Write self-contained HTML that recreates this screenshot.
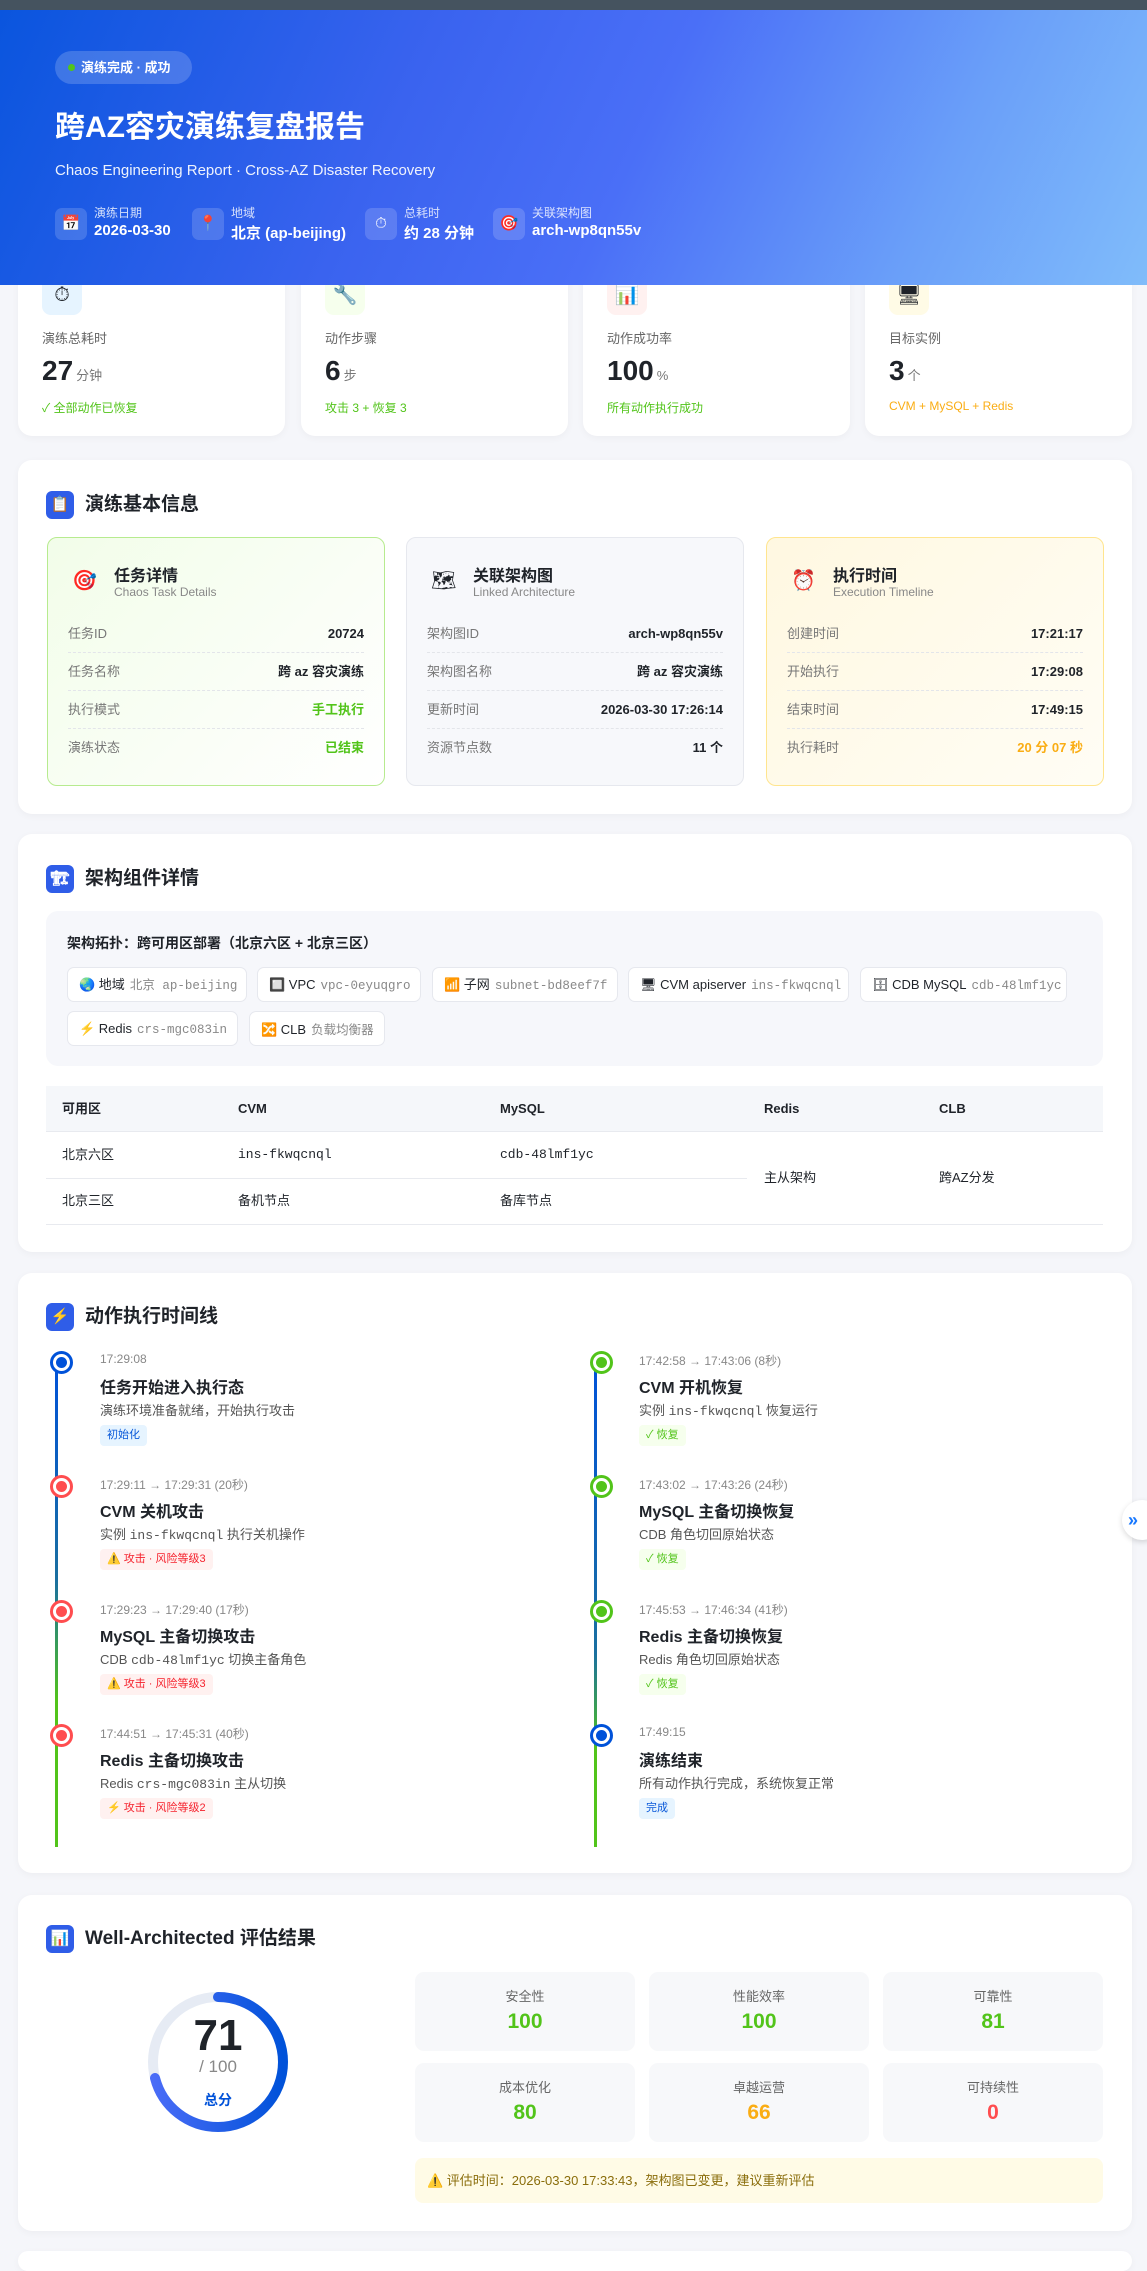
<!DOCTYPE html>
<html><head><meta charset="utf-8">
<style>
*{margin:0;padding:0;box-sizing:border-box}
body{width:1147px;height:2253px;background:#f5f6fa;font-family:"Liberation Sans","Noto Sans CJK SC",sans-serif;color:#1f2329;position:relative;overflow:hidden}
.a{position:absolute}
.mono{font-family:"Liberation Mono","Noto Sans CJK SC",monospace}
.topbar{left:0;top:0;width:1147px;height:10px;background:#45535f}
.hero{left:0;top:10px;width:1147px;height:275px;background:linear-gradient(115deg,#0a55de 0%,#3a63ef 35%,#4a6ff7 55%,#6a9ff9 80%,#80bcfa 100%);z-index:2;color:#fff}
.badge{left:55px;top:41px;height:33px;width:137px;border-radius:17px;background:rgba(255,255,255,.18);font-size:13px;font-weight:bold;line-height:33px;padding-left:26px}
.badge:before{content:"";position:absolute;left:13px;top:13px;width:7px;height:7px;border-radius:50%;background:#52c41a}
.mi{top:198px;height:32px}
.mi .ib{position:absolute;left:0;top:0;width:32px;height:32px;border-radius:7px;background:rgba(255,255,255,.16);font-size:15px;text-align:center;line-height:32px}
.mi .l{position:absolute;left:39px;top:-4px;font-size:12px;opacity:.8;white-space:nowrap}
.mi .v{position:absolute;left:39px;top:14px;font-size:15px;font-weight:bold;white-space:nowrap}
.card{background:#fff;border-radius:14px;box-shadow:0 2px 8px rgba(0,0,0,.04)}
.stat{top:250px;height:186px;width:267px}
.stat .ic{position:absolute;left:24px;top:25px;width:40px;height:40px;border-radius:9px;font-size:20px;text-align:center;line-height:40px}
.stat .lb{position:absolute;left:24px;top:78px;font-size:13px;color:#666}
.stat .vl{position:absolute;left:24px;top:105px;font-size:28px;font-weight:bold;color:#1f2329}
.stat .vl span{font-size:13px;font-weight:normal;color:#777;margin-left:3px}
.stat .sb{position:absolute;left:24px;top:149px;font-size:12px}
.sec{left:18px;width:1114px}
.h{position:absolute;left:28px;font-size:19px;font-weight:bold;white-space:nowrap}
.h i{display:inline-block;width:28px;height:28px;border-radius:6px;background:#2f5de8;vertical-align:middle;margin-right:11px;font-style:normal;font-size:15px;text-align:center;line-height:28px;color:#fff}
.sub{top:537px;width:338px;height:249px;border-radius:10px}
.sub .t{position:absolute;left:66px;top:24px;font-size:16px;font-weight:bold}
.sub .st{position:absolute;left:66px;top:47px;font-size:12px;color:#888}
.sub .ico{position:absolute;left:24px;top:30px;font-size:20px}
.row{position:absolute;left:20px;right:20px;height:38px;border-bottom:1px dashed #e3e5ea;font-size:13px;color:#777;line-height:38px}
.row b{position:absolute;right:0;top:0;color:#1f2329}
.chip{height:35px;background:#fff;border:1px solid #e6e8ee;border-radius:7px;font-size:13px;line-height:33px;padding-left:11px;white-space:nowrap}
.chip s{text-decoration:none;font-family:"Liberation Mono",monospace;color:#888;font-size:12.5px;margin-left:5px}
.tbl{font-size:13px;height:20px;line-height:20px}
.tl{position:absolute;width:3px}
.dot{position:absolute;width:23px;height:23px;border-radius:50%;border:3px solid;background:#fff}
.dot:after{content:"";position:absolute;left:3px;top:3px;width:11px;height:11px;border-radius:50%;background:currentColor}
.ev{position:absolute;white-space:nowrap}
.ev .tm{font-size:12px;color:#888;position:absolute;top:-8px}
.ev .ti{font-size:16px;font-weight:bold;position:absolute;top:14px}
.ev .ds{font-size:13px;color:#555;position:absolute;top:40px}
.ev .tg{position:absolute;top:65px;height:21px;line-height:21px;font-size:11px;padding:0 7px;border-radius:4px}
.tb{background:#e6f4ff;color:#0958d9}
.tr{background:#fff1f0;color:#f5222d}
.tgg{background:#f6ffed;color:#52c41a}
.sc{width:220px;height:79px;border-radius:9px;background:#f7f8fa;text-align:center}
.sc .n{font-size:13px;color:#666;position:absolute;top:14px;left:0;right:0}
.sc .s{font-size:21px;font-weight:bold;position:absolute;top:38px;left:0;right:0}
</style></head><body>
<div class="a topbar"></div>
<div class="a hero">
  <div class="a badge">演练完成 · 成功</div>
  <div class="a" style="left:55px;top:92px;font-size:30px;font-weight:bold">跨AZ容灾演练复盘报告</div>
  <div class="a" style="left:55px;top:152px;font-size:15px;opacity:.92">Chaos Engineering Report · Cross-AZ Disaster Recovery</div>
  <div class="a mi" style="left:55px"><div class="ib">📅</div><div class="l">演练日期</div><div class="v">2026-03-30</div></div>
  <div class="a mi" style="left:192px"><div class="ib">📍</div><div class="l">地域</div><div class="v">北京 (ap-beijing)</div></div>
  <div class="a mi" style="left:365px"><div class="ib">⏱</div><div class="l">总耗时</div><div class="v">约 28 分钟</div></div>
  <div class="a mi" style="left:493px"><div class="ib">🎯</div><div class="l">关联架构图</div><div class="v">arch-wp8qn55v</div></div>
</div>

<div class="a card stat" style="left:18px"><div class="ic" style="background:#e6f4ff">⏱</div><div class="lb">演练总耗时</div><div class="vl">27<span>分钟</span></div><div class="sb" style="color:#52c41a">✓ 全部动作已恢复</div></div>
<div class="a card stat" style="left:301px"><div class="ic" style="background:#f6ffed">🔧</div><div class="lb">动作步骤</div><div class="vl">6<span>步</span></div><div class="sb" style="color:#52c41a">攻击 3 + 恢复 3</div></div>
<div class="a card stat" style="left:583px"><div class="ic" style="background:#fff1f0">📊</div><div class="lb">动作成功率</div><div class="vl">100<span>%</span></div><div class="sb" style="color:#52c41a">所有动作执行成功</div></div>
<div class="a card stat" style="left:865px"><div class="ic" style="background:#fffbe6">🖥</div><div class="lb">目标实例</div><div class="vl">3<span>个</span></div><div class="sb" style="color:#faad14">CVM + MySQL + Redis</div></div>

<div class="a card sec" style="top:460px;height:354px">
  <div class="h" style="top:29px"><i>📋</i>演练基本信息</div>
</div>
<div class="a sub" style="left:47px;background:linear-gradient(135deg,#f2fde9,#fff);border:1px solid #b7eb8f">
  <div class="ico">🎯</div><div class="t">任务详情</div><div class="st">Chaos Task Details</div>
  <div class="row" style="top:77px">任务ID<b>20724</b></div>
  <div class="row" style="top:115px">任务名称<b>跨 az 容灾演练</b></div>
  <div class="row" style="top:153px">执行模式<b style="color:#52c41a">手工执行</b></div>
  <div class="row" style="top:191px;border:none">演练状态<b style="color:#52c41a">已结束</b></div>
</div>
<div class="a sub" style="left:406px;background:#f7f8fb;border:1px solid #e6e8ee">
  <div class="ico">🗺</div><div class="t">关联架构图</div><div class="st">Linked Architecture</div>
  <div class="row" style="top:77px">架构图ID<b>arch-wp8qn55v</b></div>
  <div class="row" style="top:115px">架构图名称<b>跨 az 容灾演练</b></div>
  <div class="row" style="top:153px">更新时间<b>2026-03-30 17:26:14</b></div>
  <div class="row" style="top:191px;border:none">资源节点数<b>11 个</b></div>
</div>
<div class="a sub" style="left:766px;background:linear-gradient(135deg,#fff8e1,#fffdf5);border:1px solid #ffe58f">
  <div class="ico">⏰</div><div class="t">执行时间</div><div class="st">Execution Timeline</div>
  <div class="row" style="top:77px">创建时间<b>17:21:17</b></div>
  <div class="row" style="top:115px">开始执行<b>17:29:08</b></div>
  <div class="row" style="top:153px">结束时间<b>17:49:15</b></div>
  <div class="row" style="top:191px;border:none">执行耗时<b style="color:#faad14">20 分 07 秒</b></div>
</div>

<div class="a card sec" style="top:834px;height:418px">
  <div class="h" style="top:29px"><i>🏗</i>架构组件详情</div>
</div>
<div class="a" style="left:46px;top:911px;width:1057px;height:155px;background:#f6f7fb;border-radius:12px"></div>
<div class="a" style="left:67px;top:933px;font-size:14px;font-weight:bold">架构拓扑：跨可用区部署（北京六区 + 北京三区）</div>
<div class="a chip" style="left:67px;top:967px;width:180px">🌏 地域<s>北京 ap-beijing</s></div>
<div class="a chip" style="left:257px;top:967px;width:164px">🔲 VPC<s>vpc-0eyuqgro</s></div>
<div class="a chip" style="left:432px;top:967px;width:186px">📶 子网<s>subnet-bd8eef7f</s></div>
<div class="a chip" style="left:628px;top:967px;width:221px">🖥 CVM apiserver<s>ins-fkwqcnql</s></div>
<div class="a chip" style="left:860px;top:967px;width:207px">🗄 CDB MySQL<s>cdb-48lmf1yc</s></div>
<div class="a chip" style="left:67px;top:1011px;width:171px">⚡ Redis<s>crs-mgc083in</s></div>
<div class="a chip" style="left:249px;top:1011px;width:136px">🔀 CLB<s style="font-family:'Noto Sans CJK SC',sans-serif">负载均衡器</s></div>

<div class="a" style="left:46px;top:1086px;width:1057px;height:46px;background:#f5f7fa;border-bottom:1px solid #e8eaef"></div>
<div class="a tbl" style="left:62px;top:1099px;font-weight:bold">可用区</div>
<div class="a tbl" style="left:238px;top:1099px;font-weight:bold">CVM</div>
<div class="a tbl" style="left:500px;top:1099px;font-weight:bold">MySQL</div>
<div class="a tbl" style="left:764px;top:1099px;font-weight:bold">Redis</div>
<div class="a tbl" style="left:939px;top:1099px;font-weight:bold">CLB</div>
<div class="a tbl" style="left:62px;top:1145px">北京六区</div>
<div class="a tbl mono" style="left:238px;top:1145px">ins-fkwqcnql</div>
<div class="a tbl mono" style="left:500px;top:1145px">cdb-48lmf1yc</div>
<div class="a" style="left:46px;top:1178px;width:701px;height:1px;background:#e8eaef"></div>
<div class="a tbl" style="left:62px;top:1191px">北京三区</div>
<div class="a tbl" style="left:238px;top:1191px">备机节点</div>
<div class="a tbl" style="left:500px;top:1191px">备库节点</div>
<div class="a tbl" style="left:764px;top:1168px">主从架构</div>
<div class="a tbl" style="left:939px;top:1168px">跨AZ分发</div>
<div class="a" style="left:46px;top:1224px;width:1057px;height:1px;background:#e8eaef"></div>

<div class="a card sec" style="top:1273px;height:600px">
  <div class="h" style="top:28px"><i style="color:#fadb14">⚡</i>动作执行时间线</div>
</div>
<div class="a tl" style="left:55px;top:1362px;height:485px;background:linear-gradient(#0052d9,#1a6fa0 45%,#52c41a 70%,#52c41a)"></div>
<div class="a tl" style="left:594px;top:1362px;height:485px;background:linear-gradient(#0052d9,#1a6fa0 60%,#52c41a 80%,#52c41a)"></div>

<div class="a dot" style="left:50px;top:1351px;color:#0052d9"></div>
<div class="a dot" style="left:50px;top:1475px;color:#ff4d4f"></div>
<div class="a dot" style="left:50px;top:1600px;color:#ff4d4f"></div>
<div class="a dot" style="left:50px;top:1724px;color:#ff4d4f"></div>
<div class="a dot" style="left:590px;top:1351px;color:#52c41a"></div>
<div class="a dot" style="left:590px;top:1475px;color:#52c41a"></div>
<div class="a dot" style="left:590px;top:1600px;color:#52c41a"></div>
<div class="a dot" style="left:590px;top:1724px;color:#0052d9"></div>

<div class="ev" style="left:100px;top:1360px"><div class="tm">17:29:08</div><div class="ti">任务开始进入执行态</div><div class="ds">演练环境准备就绪，开始执行攻击</div><div class="tg tb">初始化</div></div>
<div class="ev" style="left:100px;top:1484px"><div class="tm">17:29:11 → 17:29:31 (20秒)</div><div class="ti">CVM 关机攻击</div><div class="ds">实例 <span class="mono">ins-fkwqcnql</span> 执行关机操作</div><div class="tg tr">⚠️ 攻击 · 风险等级3</div></div>
<div class="ev" style="left:100px;top:1609px"><div class="tm">17:29:23 → 17:29:40 (17秒)</div><div class="ti">MySQL 主备切换攻击</div><div class="ds">CDB <span class="mono">cdb-48lmf1yc</span> 切换主备角色</div><div class="tg tr">⚠️ 攻击 · 风险等级3</div></div>
<div class="ev" style="left:100px;top:1733px"><div class="tm">17:44:51 → 17:45:31 (40秒)</div><div class="ti">Redis 主备切换攻击</div><div class="ds">Redis <span class="mono">crs-mgc083in</span> 主从切换</div><div class="tg tr">⚡ 攻击 · 风险等级2</div></div>
<div class="ev" style="left:639px;top:1360px"><div class="tm">17:42:58 → 17:43:06 (8秒)</div><div class="ti">CVM 开机恢复</div><div class="ds">实例 <span class="mono">ins-fkwqcnql</span> 恢复运行</div><div class="tg tgg">✓ 恢复</div></div>
<div class="ev" style="left:639px;top:1484px"><div class="tm">17:43:02 → 17:43:26 (24秒)</div><div class="ti">MySQL 主备切换恢复</div><div class="ds">CDB 角色切回原始状态</div><div class="tg tgg">✓ 恢复</div></div>
<div class="ev" style="left:639px;top:1609px"><div class="tm">17:45:53 → 17:46:34 (41秒)</div><div class="ti">Redis 主备切换恢复</div><div class="ds">Redis 角色切回原始状态</div><div class="tg tgg">✓ 恢复</div></div>
<div class="ev" style="left:639px;top:1733px"><div class="tm">17:49:15</div><div class="ti">演练结束</div><div class="ds">所有动作执行完成，系统恢复正常</div><div class="tg tb">完成</div></div>
<div class="a" style="left:1122px;top:1500px;width:40px;height:40px;border-radius:50%;background:#fff;box-shadow:0 2px 6px rgba(0,0,0,.15);color:#1677ff;font-weight:bold;font-size:18px;line-height:40px;padding-left:6px">»</div>

<div class="a card sec" style="top:1895px;height:336px">
  <div class="h" style="top:28px"><i>📊</i>Well-Architected 评估结果</div>
</div>
<svg class="a" style="left:147px;top:1991px" width="142" height="142" viewBox="0 0 142 142">
  <defs><linearGradient id="g" x1="0" y1="0" x2="0" y2="1"><stop offset="0" stop-color="#4a6cf7"/><stop offset="1" stop-color="#0052d9"/></linearGradient></defs>
  <circle cx="71" cy="71" r="65" fill="none" stroke="#e6ebf4" stroke-width="10"/>
  <circle cx="71" cy="71" r="65" fill="none" stroke="url(#g)" stroke-width="10" stroke-linecap="round" stroke-dasharray="290 409" transform="rotate(-90 71 71)"/>
</svg>
<div class="a" style="left:147px;top:2011px;width:142px;text-align:center;font-size:44px;font-weight:bold;line-height:50px">71</div>
<div class="a" style="left:147px;top:2057px;width:142px;text-align:center;font-size:17px;color:#888">/ 100</div>
<div class="a" style="left:147px;top:2090px;width:142px;text-align:center;font-size:14px;color:#0052d9;font-weight:bold">总分</div>

<div class="a sc" style="left:415px;top:1972px"><div class="n">安全性</div><div class="s" style="color:#52c41a">100</div></div>
<div class="a sc" style="left:649px;top:1972px"><div class="n">性能效率</div><div class="s" style="color:#52c41a">100</div></div>
<div class="a sc" style="left:883px;top:1972px"><div class="n">可靠性</div><div class="s" style="color:#52c41a">81</div></div>
<div class="a sc" style="left:415px;top:2063px"><div class="n">成本优化</div><div class="s" style="color:#52c41a">80</div></div>
<div class="a sc" style="left:649px;top:2063px"><div class="n">卓越运营</div><div class="s" style="color:#faad14">66</div></div>
<div class="a sc" style="left:883px;top:2063px"><div class="n">可持续性</div><div class="s" style="color:#ff4d4f">0</div></div>
<div class="a" style="left:415px;top:2158px;width:688px;height:45px;background:#fffbe6;border-radius:8px;font-size:13px;color:#8a6d0b;line-height:45px;padding-left:12px">⚠️ 评估时间：2026-03-30 17:33:43，架构图已变更，建议重新评估</div>
<div class="a card" style="left:18px;top:2251px;width:1114px;height:20px"></div>
</body></html>
